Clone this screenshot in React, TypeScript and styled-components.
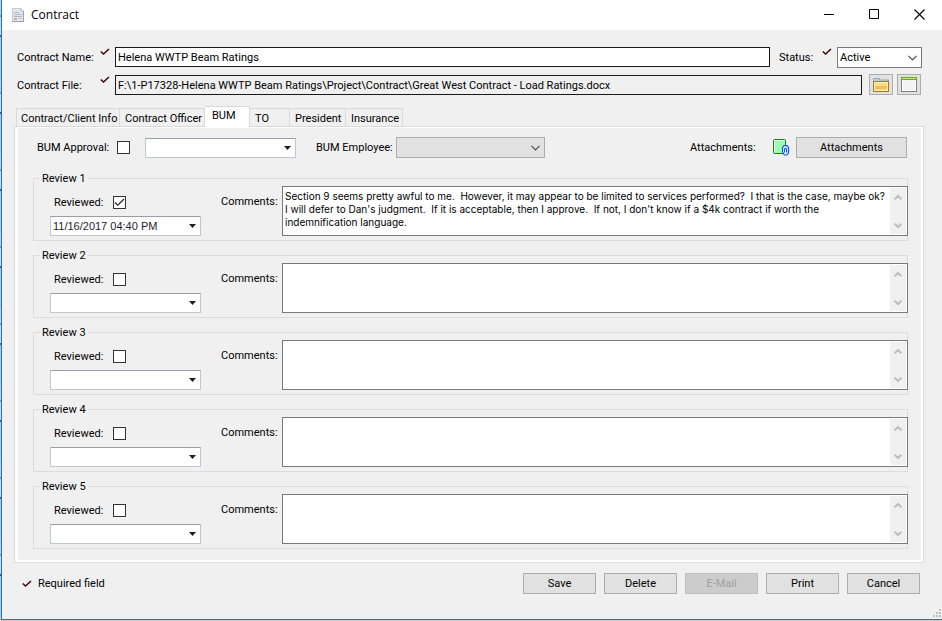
import React, { useState } from "react";
import styled, { createGlobalStyle, css } from "styled-components";

const GlobalStyle = createGlobalStyle`
  * { box-sizing: border-box; }
  body {
    margin: 0;
    background: #f0f0f0;
    color: #000;
    font: 11px/13px Roboto, "Liberation Sans", Arial, sans-serif;
  }
  button, input, select, textarea { font: inherit; color: inherit; border-radius: 0; margin: 0; }
  svg { display: block; flex: none; }
`;

const Desktop = styled.div`
  min-height: 100vh;
  display: flex;
  padding: 0 0 1px 1px;
  background: repeating-linear-gradient(180deg, #c9ccd2 0 15px, #8f94a4 15px 17px, #d4d6da 17px 35px, #50507c 35px 37px, #b9c4d0 37px 77px);
`;

const Window = styled.main`
  position: relative;
  flex: 1;
  display: flex;
  flex-direction: column;
  background: #f0f0f0;
  border-left: 1px solid #1a76c4;
  border-bottom: 1px solid #1a76c4;
`;

const TitleBar = styled.header`
  display: flex;
  align-items: center;
  height: 30px;
  padding-left: 8px;
  background: #fff;
`;

const Title = styled.h1`
  flex: 1;
  margin: 0 0 0 4px;
  font: 12px/16px "Open Sans", "Noto Sans", sans-serif;
`;

const WindowButton = styled.button`
  display: flex;
  align-items: center;
  justify-content: center;
  width: 45px;
  height: 28px;
  padding: 0;
  border: 0;
  background: transparent;
`;

const WindowButtons = styled.div`
  display: flex;
  align-self: flex-start;
`;

const Header = styled.div`
  display: flex;
  flex-direction: column;
  gap: 6px;
  padding: 17px 20px 0 15px;
`;

const HeaderRow = styled.div`
  display: flex;
  align-items: flex-start;
`;

const FieldLabel = styled.label<{ $width?: number }>`
  flex: none;
  width: ${(p) => (p.$width ? `${p.$width}px` : "auto")};
  line-height: 21px;
`;

const RequiredMark = styled.span`
  flex: none;
  padding: 1px 5px 0 0;
`;

const TextBox = styled.input`
  flex: 1;
  min-width: 0;
  height: 20px;
  padding: 0 2px;
  border: 1px solid #1a1a1a;
  background: #fff;
  &:read-only { background: #f0f0f0; }
`;

const StatusGroup = styled.div`
  display: flex;
  margin-left: 9px;
`;

const SelectWrap = styled.div<{ $width: number; $disabled?: boolean }>`
  display: grid;
  align-items: center;
  flex: none;
  width: ${(p) => p.$width}px;
  height: 21px;
  border: 1px solid ${(p) => (p.$disabled ? "#acacac" : "#7a7a7a")};
  background: ${(p) => (p.$disabled ? "#e1e1e1" : "#fff")};
  > * { grid-area: 1 / 1; }
  > svg { justify-self: end; margin-right: 4px; pointer-events: none; }
`;

const Select = styled.select`
  appearance: none;
  width: 100%;
  height: 19px;
  padding: 0 18px 0 2px;
  border: 0;
  background: transparent;
`;

const FileRow = styled(HeaderRow)`
  padding-right: 1px;
  gap: 4px;
`;

const FileField = styled.div`
  flex: 1;
  display: flex;
  align-items: flex-start;
  padding: 1px 3px 0 0;
`;

const PushButton = styled.button<{ $width?: number }>`
  display: flex;
  align-items: center;
  justify-content: center;
  flex: none;
  width: ${(p) => p.$width ?? 73}px;
  height: 21px;
  padding: 0;
  border: 1px solid #adadad;
  background: #e1e1e1;
  &:disabled { background: #cccccc; border-color: #bfbfbf; color: #a0a0a0; }
`;

const Tabs = styled.div`
  display: flex;
  align-items: flex-end;
  height: 21px;
  margin: 10px 18px -1px 14px;
  position: relative;
`;

const Tab = styled.button<{ $width: number; $active: boolean }>`
  flex: none;
  width: ${(p) => p.$width}px;
  height: 19px;
  padding: 1px 0 0 5px;
  border: 1px solid #d9d9d9;
  border-left-width: 0;
  background: #f0f0f0;
  text-align: left;
  white-space: nowrap;
  &:first-child { border-left-width: 1px; padding-left: 4px; }
  ${(p) =>
    p.$active &&
    css`
      height: 21px;
      padding: 0 0 2px 7px;
      background: #fff;
      border-bottom-color: #fff;
    `}
`;

const TabPanel = styled.section`
  margin: 0 18px 0 12px;
  border: 1px solid #dcdcdc;
  background: #fff;
  padding: 1px 2px 2px 3px;
`;

const PanelBody = styled.div`
  background: #f0f0f0;
  padding: 9px 13px 11px 15px;
`;

const ApprovalRow = styled.div`
  display: flex;
  align-items: center;
  height: 21px;
  margin-bottom: 14px;
  padding: 0 1px 0 4px;
`;

const InlineLabel = styled.label<{ $width: number }>`
  flex: none;
  width: ${(p) => p.$width}px;
  white-space: nowrap;
`;

const CheckWrap = styled.span`
  display: grid;
  flex: none;
  width: 13px;
  height: 13px;
  > * { grid-area: 1 / 1; }
  > svg { pointer-events: none; }
`;

const CheckInput = styled.input`
  appearance: none;
  width: 13px;
  height: 13px;
  border: 1px solid #333;
  background: #fff;
`;

const DateBox = styled.div`
  display: flex;
  flex: none;
  width: 151px;
  height: 20px;
  border: 1px solid #c3c5cf;
  border-top-color: #9a9ca8;
  background: #fff;
`;

const DateInput = styled.input`
  flex: 1;
  min-width: 0;
  padding: 0 0 0 2px;
  border: 0;
  background: transparent;
  font-family: "Liberation Sans", Arial, sans-serif;
  color: #1e1e2e;
`;

const DropButton = styled.button`
  display: flex;
  align-items: center;
  justify-content: center;
  width: 16px;
  padding: 0;
  border: 0;
  background: transparent;
`;

const PickerField = styled.div`
  margin: 0 20px 0 15px;
`;

const EmployeeField = styled.div`
  display: flex;
  align-items: center;
`;

const AttachmentField = styled.div`
  display: flex;
  align-items: center;
  margin-left: auto;
  gap: 6px;
`;

const Reviews = styled.div`
  display: flex;
  flex-direction: column;
  gap: 8px;
`;

const ReviewGroup = styled.fieldset`
  min-width: 0;
  margin: 0;
  padding: 1px 0 4px 16px;
  border: 1px solid #dcdcdc;
`;

const Legend = styled.legend`
  margin-left: -10px;
  padding: 0 2px;
`;

const ReviewRow = styled.div`
  display: flex;
  margin-right: -1px;
`;

const ReviewedColumn = styled.div`
  display: flex;
  flex-direction: column;
  justify-content: flex-end;
  gap: 7px;
  margin-right: 20px;
`;

const ReviewedLine = styled.div`
  display: flex;
  align-items: center;
  padding-left: 4px;
`;

const CommentLabel = styled.label`
  flex: none;
  width: 61px;
  padding-top: 9px;
`;

const CommentBox = styled.div`
  flex: 1;
  display: flex;
  height: 50px;
  padding: 1px;
  border: 1px solid #7a7a7a;
  background: #fff;
`;

const CommentText = styled.textarea`
  flex: 1;
  min-width: 0;
  padding: 2px 1px;
  border: 0;
  resize: none;
  overflow: hidden;
  background: transparent;
  font: 10px/13px Inter, "Liberation Sans", sans-serif;
`;

const ScrollTrack = styled.div`
  display: flex;
  flex-direction: column;
  align-items: center;
  justify-content: space-between;
  width: 16px;
  padding: 6px 0 5px;
  background: #f0f0f0;
`;

const Footer = styled.footer`
  display: flex;
  align-items: center;
  gap: 8px;
  padding: 10px 22px 25px 20px;
`;

const RequiredNote = styled.span`
  flex: 1;
  display: flex;
  align-items: center;
  gap: 6px;
`;

const Grip = styled.span`
  position: absolute;
  right: 1px;
  bottom: 2px;
`;

const Tick = () => (
  <svg width="10" height="8" viewBox="0 0 10 8" aria-hidden="true">
    <path d="M0.8 3.5L3.5 6L9 1" fill="none" stroke="#3a0808" strokeWidth="1.5" />
  </svg>
);

const Chevron = () => (
  <svg width="9" height="6" viewBox="0 0 9 6" aria-hidden="true">
    <path d="M0.5 0.8L4.5 4.8L8.5 0.8" fill="none" stroke="#505050" strokeWidth="1.2" />
  </svg>
);

const ScrollArrow = ({ up }: { up?: boolean }) => (
  <svg width="8" height="7" viewBox="0 0 8 7" aria-hidden="true">
    <path d={up ? "M0.6 5.4L4 2L7.4 5.4" : "M0.6 1.6L4 5L7.4 1.6"} fill="none" stroke="#bdbdbd" strokeWidth="2" />
  </svg>
);

const DocumentIcon = () => (
  <svg width="17" height="16" viewBox="0 0 17 16" aria-hidden="true">
    <path d="M2.5 1.500H11L13.500 4V14.500H2.500Z" fill="#e3e7ee" stroke="#c3c9d4" />
    <path d="M13.500 4V14.500H2" fill="none" stroke="#98a2b4" />
    <path d="M11 1.500V4H13.500" fill="#fff" stroke="#b2bac8" />
    <path d="M4 5.500H9M4 7.500H12M4 9.500H12" stroke="#b0b7c4" />
    <path d="M4 12H7" stroke="#d9a6a6" strokeWidth="2" />
    <path d="M8 11.500H12" stroke="#bcc2cd" />
  </svg>
);

const FolderIcon = () => (
  <svg width="16" height="16" viewBox="0 0 16 16" aria-hidden="true">
    <path d="M0.5 5V1.500H6.500V3H15.500V5" fill="#b5d6ec" stroke="#8fa9bf" />
    <rect x="0.5" y="4.500" width="15" height="10" fill="#fbdb8a" stroke="#a87a1c" />
    <path d="M1.500 5.500H14.500M1.500 13.500H14.500M1.500 5V14M14.500 5V14" stroke="#fff0c4" />
    <path d="M2 10.500H14" stroke="#f6c04e" strokeWidth="3" />
  </svg>
);

const FormIcon = () => (
  <svg width="16" height="16" viewBox="0 0 16 16" aria-hidden="true">
    <rect x="0.5" y="1.500" width="15" height="13" fill="#f4f4f4" stroke="#808080" />
    <path d="M1.500 3V13.500H14.500V3" fill="none" stroke="#fff" />
    <rect x="0.5" y="0.500" width="15" height="2" fill="#c4ec7c" stroke="#74a41c" />
  </svg>
);

const AttachmentIcon = () => (
  <svg width="17" height="17" viewBox="0 0 17 17" aria-hidden="true">
    <rect x="0.5" y="0.500" width="12" height="14" rx="1" fill="#99ffb3" stroke="#1d7a1d" />
    <path d="M1.500 13V1.500H11.500" fill="none" stroke="#e4ffe9" />
    <path d="M9.500 13V8.500L11 6.600H14L15.500 8.500V14L14 16H11.500L10 14.500V13" fill="#e8f0ff" stroke="#1556f0" strokeWidth="1.200" />
    <path d="M11.500 13.500V9.500H13.500V13.500" fill="none" stroke="#1556f0" />
  </svg>
);

const GripIcon = () => (
  <svg width="8" height="8" viewBox="0 0 8 8" aria-hidden="true">
    <path d="M6 0h2v2h-2zM3 3h2v2h-2zM6 3h2v2h-2zM0 6h2v2h-2zM3 6h2v2h-2zM6 6h2v2h-2z" fill="#bfbfbf" />
  </svg>
);

function CheckBox({ id, initial = false }: { id: string; initial?: boolean }) {
  const [checked, setChecked] = useState(initial);
  return (
    <CheckWrap>
      <CheckInput id={id} type="checkbox" checked={checked} onChange={(e) => setChecked(e.target.checked)} />
      {checked && (
        <svg width="13" height="13" viewBox="0 0 13 13" aria-hidden="true">
          <path d="M2 6.500L4.800 9.200L11 3" fill="none" stroke="#222" strokeWidth="1.200" />
        </svg>
      )}
    </CheckWrap>
  );
}

function DatePicker({ label, value = "" }: { label: string; value?: string }) {
  return (
    <DateBox>
      <DateInput type="text" aria-label={label} defaultValue={value} />
      <DropButton type="button" aria-label={`Open ${label}`}>
        <svg width="7" height="4" viewBox="0 0 7 4" aria-hidden="true">
          <path d="M0 0H7L3.500 4Z" fill="#1e1e2e" />
        </svg>
      </DropButton>
    </DateBox>
  );
}

interface Review {
  id: number;
  reviewed?: boolean;
  date?: string;
  comments?: string;
}

const reviews: Review[] = [
  {
    id: 1,
    reviewed: true,
    date: "11/16/2017 04:40 PM",
    comments:
      "Section 9 seems pretty awful to me.  However, it may appear to be limited to services performed?  I that is the case, maybe ok?\nI will defer to Dan's judgment.  If it is acceptable, then I approve.  If not, I don't know if a $4k contract if worth the\nindemnification language.",
  },
  { id: 2 },
  { id: 3 },
  { id: 4 },
  { id: 5 },
];

function ReviewSection({ review }: { review: Review }) {
  const { id } = review;
  return (
    <ReviewGroup>
      <Legend>Review {id}</Legend>
      <ReviewRow>
        <ReviewedColumn>
          <ReviewedLine>
            <InlineLabel $width={59} htmlFor={`reviewed-${id}`}>Reviewed:</InlineLabel>
            <CheckBox id={`reviewed-${id}`} initial={review.reviewed} />
          </ReviewedLine>
          <DatePicker label={`Review ${id} date`} value={review.date} />
        </ReviewedColumn>
        <CommentLabel htmlFor={`comments-${id}`}>Comments:</CommentLabel>
        <CommentBox>
          <CommentText id={`comments-${id}`} defaultValue={review.comments} spellCheck={false} />
          <ScrollTrack aria-hidden="true">
            <ScrollArrow up />
            <ScrollArrow />
          </ScrollTrack>
        </CommentBox>
      </ReviewRow>
    </ReviewGroup>
  );
}

const tabs = [
  { name: "Contract/Client Info", width: 104 },
  { name: "Contract Officer", width: 85 },
  { name: "BUM", width: 45 },
  { name: "TO", width: 40 },
  { name: "President", width: 56 },
  { name: "Insurance", width: 57 },
];

export default function App() {
  const [active, setActive] = useState("BUM");
  return (
    <>
      <GlobalStyle />
      <Desktop>
        <Window>
          <TitleBar>
            <DocumentIcon />
            <Title>Contract</Title>
            <WindowButtons>
              <WindowButton type="button" aria-label="Minimize">
                <svg width="11" height="11"><path d="M0 5.500H10" stroke="#000" /></svg>
              </WindowButton>
              <WindowButton type="button" aria-label="Maximize">
                <svg width="11" height="11"><path d="M0.500 0.500H9.500V9.500H0.500Z" fill="none" stroke="#000" /></svg>
              </WindowButton>
              <WindowButton type="button" aria-label="Close">
                <svg width="11" height="11"><path d="M0.500 0.500L10.500 10.500M10.500 0.500L0.500 10.500" stroke="#000" strokeWidth="1.100" /></svg>
              </WindowButton>
            </WindowButtons>
          </TitleBar>

          <Header>
            <HeaderRow>
              <FieldLabel $width={83} htmlFor="contract-name">Contract Name:</FieldLabel>
              <RequiredMark><Tick /></RequiredMark>
              <TextBox id="contract-name" defaultValue="Helena WWTP Beam Ratings" />
              <StatusGroup>
                <FieldLabel $width={43} htmlFor="status">Status:</FieldLabel>
                <RequiredMark><Tick /></RequiredMark>
                <SelectWrap $width={85}>
                  <Select id="status" defaultValue="Active">
                    <option>Active</option>
                    <option>Inactive</option>
                  </Select>
                  <Chevron />
                </SelectWrap>
              </StatusGroup>
            </HeaderRow>
            <FileRow>
              <FileField>
                <FieldLabel $width={83} htmlFor="contract-file">Contract File:</FieldLabel>
                <RequiredMark><Tick /></RequiredMark>
                <TextBox
                  id="contract-file"
                  readOnly
                  value="F:\1-P17328-Helena WWTP Beam Ratings\Project\Contract\Great West Contract - Load Ratings.docx"
                />
              </FileField>
              <PushButton type="button" $width={24} aria-label="Browse"><FolderIcon /></PushButton>
              <PushButton type="button" $width={24} aria-label="Open file"><FormIcon /></PushButton>
            </FileRow>
          </Header>

          <Tabs role="tablist">
            {tabs.map((t) => (
              <Tab
                key={t.name}
                type="button"
                role="tab"
                aria-selected={t.name === active}
                $active={t.name === active}
                $width={t.width}
                onClick={() => setActive(t.name)}
              >
                {t.name}
              </Tab>
            ))}
          </Tabs>

          <TabPanel role="tabpanel">
            <PanelBody>
              <ApprovalRow>
                <InlineLabel $width={80} htmlFor="bum-approval">BUM Approval:</InlineLabel>
                <CheckBox id="bum-approval" />
                <PickerField>
                  <DatePicker label="BUM approval date" />
                </PickerField>
                <EmployeeField>
                  <InlineLabel $width={80} htmlFor="bum-employee">BUM Employee:</InlineLabel>
                  <SelectWrap $width={149} $disabled>
                    <Select id="bum-employee" disabled />
                    <Chevron />
                  </SelectWrap>
                </EmployeeField>
                <AttachmentField>
                  <InlineLabel $width={77} htmlFor="attachments">Attachments:</InlineLabel>
                  <AttachmentIcon />
                  <PushButton id="attachments" type="button" $width={111}>Attachments</PushButton>
                </AttachmentField>
              </ApprovalRow>
              <Reviews>
                {reviews.map((r) => (
                  <ReviewSection key={r.id} review={r} />
                ))}
              </Reviews>
            </PanelBody>
          </TabPanel>

          <Footer>
            <RequiredNote><Tick />Required field</RequiredNote>
            <PushButton type="button">Save</PushButton>
            <PushButton type="button">Delete</PushButton>
            <PushButton type="button" disabled>E-Mail</PushButton>
            <PushButton type="button">Print</PushButton>
            <PushButton type="button">Cancel</PushButton>
          </Footer>
          <Grip><GripIcon /></Grip>
        </Window>
      </Desktop>
    </>
  );
}
